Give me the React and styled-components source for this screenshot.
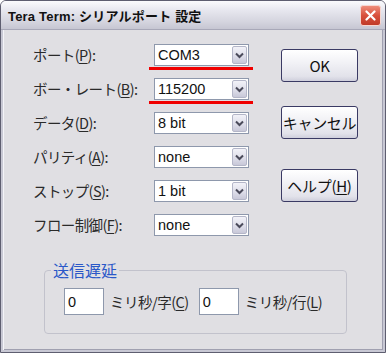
import React from 'react';
import styled, { createGlobalStyle } from 'styled-components';

const GlobalStyle = createGlobalStyle`
  html, body {
    margin: 0;
    padding: 0;
    background: #ffffff;
  }
  body {
    font-family: "Liberation Sans", "Noto Sans CJK JP", sans-serif;
  }
`;

const Window = styled.div`
  width: 386px;
  height: 353px;
  box-sizing: border-box;
  display: flex;
  flex-direction: column;
  border: 1px solid #5e5e70;
  border-radius: 6px 6px 0 0;
  background: #e0dfe3;
  overflow: hidden;
`;

const TitleBar = styled.div`
  height: 28px;
  flex: none;
  display: flex;
  align-items: center;
  justify-content: space-between;
  padding: 0 4px 0 7px;
  background: linear-gradient(to bottom, #fbfbfd 0%, #e6e6ee 35%, #d4d4de 75%, #c6c6d2 100%);
  border-bottom: 1px solid #a8a8b8;
`;

const Title = styled.span`
  font-family: "Liberation Sans", "Noto Sans CJK JP", sans-serif;
  font-weight: bold;
  font-size: 13px;
  color: #111;
  letter-spacing: 0.2px;
`;

const CloseButton = styled.div`
  width: 21px;
  height: 21px;
  flex: none;
  box-sizing: border-box;
  border-radius: 3px;
  border: 1px solid #f6d6d0;
  background-color: #d8503c;
  background-image: linear-gradient(#ee8c7a, #d8503c 50%, #c03a28);
  display: flex;
  align-items: center;
  justify-content: center;
`;

const Body = styled.div`
  flex: 1;
  display: flex;
  flex-direction: column;
  padding: 14px 0 0 30px;
  border-left: 2px solid #c8c8d4;
  border-right: 2px solid #c8c8d4;
  border-bottom: 2px solid #c8c8d4;
  box-shadow: inset 1px 0 0 #f4f4f8, inset -1px 0 0 #a0a0b0, inset 0 -1px 0 #a0a0b0;
`;

const TopRow = styled.div`
  display: flex;
`;

const FieldGrid = styled.div`
  display: grid;
  grid-template-columns: 121px 95px;
  grid-auto-rows: 22px;
  row-gap: 12px;
`;

const Label = styled.div`
  font-family: "Noto Sans CJK JP", sans-serif;
  font-size: 14.5px;
  color: #2a2a2a;
  line-height: 22px;
  letter-spacing: -0.6px;
  white-space: nowrap;
  u { text-decoration-thickness: 1px; text-underline-offset: 2px; }
`;

const ComboWrap = styled.div`
  position: relative;
  &::after {
    content: '';
    display: ${p => (p.$marked ? 'block' : 'none')};
    position: absolute;
    left: -5px;
    right: -4px;
    bottom: -4px;
    height: 3px;
    background: #f00000;
  }
`;

const Combo = styled.div`
  height: 22px;
  box-sizing: border-box;
  border: 1px solid #8e98ac;
  background: #ffffff;
  display: flex;
  align-items: center;
  justify-content: space-between;
  padding: 0 1px 0 3px;
  font-family: "Liberation Sans", sans-serif;
  font-size: 14.5px;
  color: #111;
`;

const DropButton = styled.div`
  width: 15px;
  height: 18px;
  box-sizing: border-box;
  border: 1px solid #b4b6c8;
  border-radius: 2px;
  background: linear-gradient(to bottom, #f2f2f8 0%, #dcdce8 60%, #c8c8d8 100%);
  display: flex;
  align-items: center;
  justify-content: center;
`;

const ButtonColumn = styled.div`
  display: flex;
  flex-direction: column;
  margin: 5px 0 0 32px;
`;

const Button = styled.div`
  width: 77px;
  height: 33px;
  box-sizing: border-box;
  margin-top: ${p => p.$space || 0}px;
  border: 1px solid #3a3a64;
  border-radius: 3px;
  background: linear-gradient(to bottom, #ffffff 0%, #f2f2f6 40%, #e2e2ea 85%, #cfcfdc 100%);
  display: flex;
  align-items: center;
  justify-content: center;
  font-family: "Noto Sans CJK JP", sans-serif;
  font-size: 15px;
  color: #111;
  white-space: nowrap;
  letter-spacing: -0.3px;
  u { text-underline-offset: 2px; }
`;

const Group = styled.fieldset`
  margin: 25px 0 0 11px;
  width: 303px;
  height: 73px;
  box-sizing: border-box;
  padding: 0 0 0 6px;
  border: 1px solid #c2c2cc;
  border-radius: 4px;
`;

const Legend = styled.legend`
  padding: 0 2px;
  font-family: "Noto Sans CJK JP", sans-serif;
  font-size: 16px;
  line-height: 18px;
  color: #2a58c8;
`;

const DelayRow = styled.div`
  display: flex;
  align-items: center;
  margin: 9px 0 0 13px;
`;

const NumInput = styled.div`
  width: 40px;
  height: 27px;
  box-sizing: border-box;
  border: 1px solid #8e98ac;
  background: #ffffff;
  padding: 0 0 0 3px;
  display: flex;
  align-items: center;
  font-family: "Liberation Sans", sans-serif;
  font-size: 14.5px;
  color: #111;
`;

const Unit = styled.span`
  margin: 0 ${p => p.$after || 0}px 0 6px;
  font-family: "Noto Sans CJK JP", sans-serif;
  font-size: 14.5px;
  color: #2a2a2a;
  letter-spacing: -0.5px;
  white-space: nowrap;
  u { text-underline-offset: 2px; }
`;

const Chevron = () => (
  <svg width="9" height="7" viewBox="0 0 9 7">
    <path d="M1 1.5 L4.5 5 L8 1.5" fill="none" stroke="#4a4a5a" strokeWidth="2" />
  </svg>
);

const CloseX = () => (
  <svg width="11" height="11" viewBox="0 0 11 11">
    <path d="M1.5 1.5 L9.5 9.5 M9.5 1.5 L1.5 9.5" stroke="#ffffff" strokeWidth="2.2" strokeLinecap="round" />
  </svg>
);

const fields = [
  { name: 'ポート(', key: 'P', value: 'COM3', marked: true },
  { name: 'ボー・レート(', key: 'B', value: '115200', marked: true },
  { name: 'データ(', key: 'D', value: '8 bit' },
  { name: 'パリティ(', key: 'A', value: 'none' },
  { name: 'ストップ(', key: 'S', value: '1 bit' },
  { name: 'フロー制御(', key: 'F', value: 'none' },
];

export default function App() {
  return (
    <>
      <GlobalStyle />
      <Window>
        <TitleBar>
          <Title>Tera Term: シリアルポート 設定</Title>
          <CloseButton><CloseX /></CloseButton>
        </TitleBar>
        <Body>
          <TopRow>
            <FieldGrid>
              {fields.map(f => (
                <React.Fragment key={f.key}>
                  <Label>{f.name}<u>{f.key}</u>):</Label>
                  <ComboWrap $marked={f.marked}>
                    <Combo>
                      <span>{f.value}</span>
                      <DropButton><Chevron /></DropButton>
                    </Combo>
                  </ComboWrap>
                </React.Fragment>
              ))}
            </FieldGrid>
            <ButtonColumn>
              <Button>OK</Button>
              <Button $space={24}>キャンセル</Button>
              <Button $space={30}>ヘルプ(<u>H</u>)</Button>
            </ButtonColumn>
          </TopRow>
          <Group>
            <Legend>送信遅延</Legend>
            <DelayRow>
              <NumInput>0</NumInput>
              <Unit $after={10}>ミリ秒/字(<u>C</u>)</Unit>
              <NumInput>0</NumInput>
              <Unit>ミリ秒/行(<u>L</u>)</Unit>
            </DelayRow>
          </Group>
        </Body>
      </Window>
    </>
  );
}
